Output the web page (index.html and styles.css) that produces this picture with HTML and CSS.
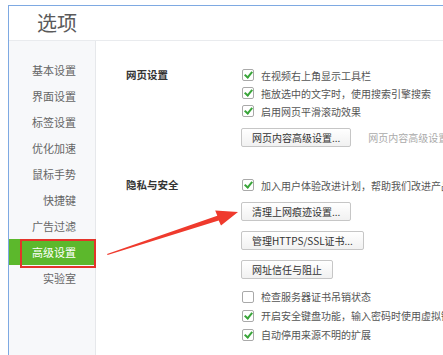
FILE: index.html
```html
<!DOCTYPE html>
<html lang="zh">
<head>
<meta charset="utf-8">
<link rel="stylesheet" href="styles.css">
</head>
<body>
<div class="window">
  <div class="header"><span class="title">选项</span></div>
  <div class="main">
    <ul class="sidebar">
      <li class="nav-item">基本设置</li>
      <li class="nav-item">界面设置</li>
      <li class="nav-item">标签设置</li>
      <li class="nav-item">优化加速</li>
      <li class="nav-item">鼠标手势</li>
      <li class="nav-item">快捷键</li>
      <li class="nav-item">广告过滤</li>
      <li class="nav-item active">高级设置</li>
      <li class="nav-item">实验室</li>
    </ul>
    <div class="content">
      <div class="section">
        <div class="label">网页设置</div>
        <div class="items">
          <div class="check-row"><span class="cb on"></span>在视频右上角显示工具栏</div>
          <div class="check-row"><span class="cb on"></span>拖放选中的文字时，使用搜索引擎搜索</div>
          <div class="check-row"><span class="cb on"></span>启用网页平滑滚动效果</div>
          <div class="btn-row first"><span class="btn">网页内容高级设置...</span><span class="hint">网页内容高级设置</span></div>
        </div>
      </div>
      <div class="section second">
        <div class="label">隐私与安全</div>
        <div class="items">
          <div class="check-row"><span class="cb on"></span>加入用户体验改进计划，帮助我们改进产品</div>
          <div class="btn-row first"><span class="btn">清理上网痕迹设置...</span></div>
          <div class="btn-row"><span class="btn">管理HTTPS/SSL证书...</span></div>
          <div class="btn-row"><span class="btn">网址信任与阻止</span></div>
          <div class="check-row tall gap"><span class="cb"></span>检查服务器证书吊销状态</div>
          <div class="check-row tall"><span class="cb on"></span>开启安全键盘功能，输入密码时使用虚拟键盘</div>
          <div class="check-row tall"><span class="cb on"></span>自动停用来源不明的扩展</div>
        </div>
      </div>
    </div>
  </div>
</div>
<svg class="arrow" width="443" height="355" viewBox="0 0 443 355">
  <polygon points="107,254 217.3,215.8 215.2,210.6 238,212 221,225.5 218.7,220.4 107.6,255" fill="#ef3a2d"/>
</svg>
</body>
</html>
```
FILE: styles.css
```css
html, body {
  margin: 0;
  padding: 0;
  width: 443px;
  height: 355px;
  overflow: hidden;
  background: #fff;
  font-family: "Noto Sans CJK SC", "Microsoft YaHei", sans-serif;
  font-size: 10px;
  color: #555;
}
.window {
  margin: 5px 0 0 8px;
  height: 350px;
  border-top: 1px solid #7ea9e2;
  border-left: 1px solid #7ea9e2;
  display: flex;
  flex-direction: column;
  box-sizing: border-box;
  background: #fff;
}
.header {
  height: 34px;
  flex: none;
  border-bottom: 1px solid #e9ebee;
  display: flex;
  align-items: center;
  padding-left: 28px;
}
.title {
  font-size: 20px;
  color: #5a5a5a;
  line-height: 1;
}
.main {
  flex: 1;
  display: flex;
  min-height: 0;
}
.sidebar {
  list-style: none;
  margin: 0;
  padding: 16px 0 0 0;
  width: 86px;
  flex: none;
  background: #f7f8fa;
  border-right: 1px solid #e6e8eb;
}
.nav-item {
  height: 26px;
  line-height: 26px;
  font-size: 11px;
  text-align: right;
  padding-right: 19px;
  color: #666;
  white-space: nowrap;
  position: relative;
}
.nav-item.active {
  background: #5cb82c;
  color: #fff;
}
.nav-item.active::after {
  content: "";
  position: absolute;
  left: 11px;
  right: -1px;
  top: 0;
  bottom: -3px;
  border: 2px solid #e3342a;
}
.content {
  flex: 1;
  padding: 25px 0 0 30px;
  white-space: nowrap;
  overflow: hidden;
}
.section {
  display: grid;
  grid-template-columns: 115px 1fr;
}
.section.second {
  margin-top: 29px;
}
.label {
  font-weight: bold;
  font-size: 10.5px;
  color: #333;
  height: 18px;
  line-height: 18px;
}
.check-row {
  display: flex;
  align-items: center;
  height: 18px;
  color: #555;
}
.check-row.tall {
  height: 19px;
}
.check-row.gap {
  margin-top: 8px;
}
.cb {
  width: 10px;
  height: 10px;
  border: 1px solid #a9a9a9;
  border-radius: 2px;
  background: #fff;
  margin: 0 7px 0 1px;
  position: relative;
  flex: none;
}
.cb.on::after {
  content: "";
  position: absolute;
  left: 3px;
  top: 0px;
  width: 3px;
  height: 6px;
  border-right: 2px solid #3aa53a;
  border-bottom: 2px solid #3aa53a;
  transform: rotate(40deg);
}
.btn-row {
  display: flex;
  align-items: center;
  margin-top: 10px;
}
.btn-row.first {
  margin-top: 8px;
}
.btn {
  display: inline-block;
  height: 17px;
  line-height: 17px;
  padding: 0 10px;
  border: 1px solid #c6c6c6;
  border-radius: 2px;
  background: linear-gradient(#ffffff, #f1f1f1);
  color: #333;
}
.hint {
  margin-left: 17px;
  color: #aaa;
}
.arrow {
  position: absolute;
  left: 0;
  top: 0;
  pointer-events: none;
}
```
